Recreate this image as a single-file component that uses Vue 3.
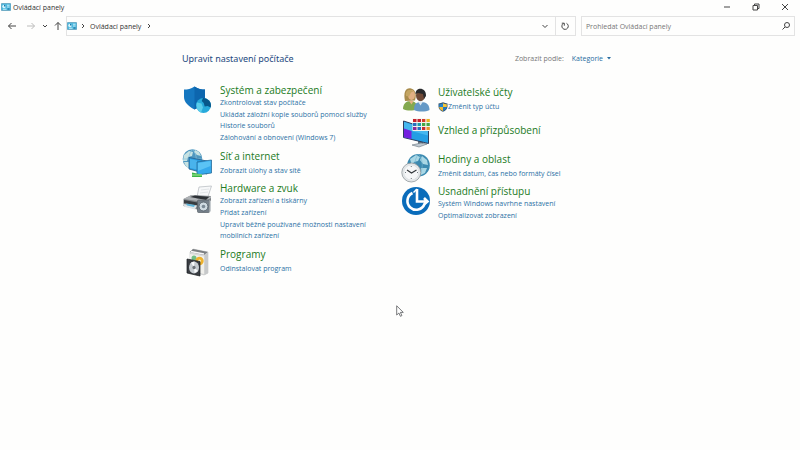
<template>
  <div class="window">
    <header class="title-bar">
      <svg class="panel-icon" viewBox="0 0 20 16" aria-hidden="true">
        <rect x="0.5" y="1" width="19" height="14" rx="1" fill="#4fb9df" stroke="#3b7f9f" />
        <circle cx="6" cy="7" r="3.5" fill="#d9f4fc" />
        <path d="M6 7V3.5A3.5 3.5 0 0 1 9.500 7z" fill="#1677a8" />
        <path d="M12 4.500h5M12 8h5M4 12.500h7" stroke="#e9fbff" stroke-width="1.5" />
        <rect x="13" y="11" width="4" height="2" fill="#17628c" />
      </svg>
      <h1 class="title">Ovládací panely</h1>
      <div class="window-buttons">
        <button type="button" aria-label="Minimalizovat">
          <svg viewBox="0 0 8 8"><path d="M1 4h6" /></svg>
        </button>
        <button type="button" aria-label="Obnovit">
          <svg viewBox="0 0 8 8"><path d="M1 2.500h4.500V7H1zM2.500 2.500V1H7v4.500H5.500" /></svg>
        </button>
        <button type="button" aria-label="Zavřít">
          <svg viewBox="0 0 8 8"><path d="M1 1l6 6M7 1L1 7" /></svg>
        </button>
      </div>
    </header>

    <div class="toolbar">
      <div class="history">
        <button type="button" class="back" aria-label="Zpět">
          <svg viewBox="0 0 10 10"><path d="M9 5H1.500M4.500 2l-3 3 3 3" /></svg>
        </button>
        <button type="button" class="forward" aria-label="Vpřed">
          <svg viewBox="0 0 10 10"><path d="M1 5h7.500M5.500 2l3 3-3 3" /></svg>
        </button>
        <button type="button" class="recent" aria-label="Poslední umístění">
          <svg viewBox="0 0 10 10"><path d="M3 4l2 2 2-2" /></svg>
        </button>
        <button type="button" class="up" aria-label="Nahoru">
          <svg viewBox="0 0 10 10"><path d="M5 9V1.500M2 4.500l3-3 3 3" /></svg>
        </button>
      </div>
      <nav class="address" aria-label="Umístění">
        <svg class="panel-icon" viewBox="0 0 20 16" aria-hidden="true">
          <rect x="0.5" y="1" width="19" height="14" rx="1" fill="#4fb9df" stroke="#3b7f9f" />
          <circle cx="6" cy="7" r="3.5" fill="#d9f4fc" />
          <path d="M6 7V3.500A3.500 3.500 0 0 1 9.500 7z" fill="#1677a8" />
          <path d="M12 4.500h5M12 8h5M4 12.500h7" stroke="#e9fbff" stroke-width="1.5" />
          <rect x="13" y="11" width="4" height="2" fill="#17628c" />
        </svg>
        <svg class="chevron" viewBox="0 0 6 8" aria-hidden="true"><path d="M2 2l2 2-2 2" /></svg>
        <a href="#" class="crumb">Ovládací panely</a>
        <svg class="chevron" viewBox="0 0 6 8" aria-hidden="true"><path d="M2 2l2 2-2 2" /></svg>
        <button type="button" class="expand" aria-label="Předchozí umístění">
          <svg viewBox="0 0 10 10"><path d="M2.500 4L5 6.500 7.500 4" /></svg>
        </button>
        <button type="button" class="refresh" aria-label="Aktualizovat">
          <svg viewBox="0 0 10 10"><path d="M6.500 2.300A3.200 3.200 0 1 1 3.300 2.500M1.800 2.200h2.500v2.500" /></svg>
        </button>
      </nav>
      <form class="search" @submit.prevent>
        <input v-model="query" type="search" placeholder="Prohledat Ovládací panely" aria-label="Prohledat Ovládací panely" />
        <button type="submit" aria-label="Hledat">
          <svg viewBox="0 0 10 10"><circle cx="6" cy="4" r="2.500" /><path d="M4 6L1.500 8.500" /></svg>
        </button>
      </form>
    </div>

    <main class="content">
      <div class="heading">
        <h2>Upravit nastavení počítače</h2>
        <div class="view-by">
          <span id="view-label">Zobrazit podle:</span>
          <button id="view-button" type="button" aria-haspopup="menu" aria-labelledby="view-label view-button">
            Kategorie
            <svg viewBox="0 0 4 3" aria-hidden="true"><path d="M0 0h4L2 2.500z" fill="#286b9f" /></svg>
          </button>
        </div>
      </div>

      <div class="columns">
        <ul v-for="(column, i) in columns" :key="i" class="column" :class="i === 0 ? 'first' : 'second'">
          <li v-for="item in column" :key="item.title" class="category">
            <svg v-if="item.icon === 'security'" class="icon" viewBox="0 0 30 32" aria-hidden="true">
              <path d="M12.500 3.500C9 6 5.500 6.500 2 6.500v7.500c0 5 4 9 10.500 12.500C19 23 23 19 23 14V6.500c-3.500 0-7-.5-10.500-3z" fill="#1577c0" />
              <path d="M12.500 3.500v23C19 23 23 19 23 14V6.500c-3.500 0-7-.5-10.500-3z" fill="#0d66ae" />
              <circle cx="21.500" cy="22.500" r="7.500" fill="#27aadb" />
              <path d="M21 15.100a7.500 7.500 0 0 1 7.700 9.500l-3-1.500-3 .5-1-3.500-2-2z" fill="#07578a" />
              <path d="M15 19.500l4.500 1 1.500 4-2 5a7.500 7.500 0 0 1-4-10z" fill="#5ccdea" />
            </svg>
            <svg v-else-if="item.icon === 'network'" class="icon" viewBox="0 0 30 32" aria-hidden="true">
              <circle cx="10.500" cy="10" r="9.800" fill="#4f97bf" />
              <path d="M2 6l5-4 4 1-1 4-4 1-1 4H1zM13 1l4 2 2 4-4-1-3-3zM2 13h5l2 4-2 2c-3-1-4-3-5-6z" fill="#c7e2e2" />
              <path d="M10.500.5c-5 5-5 14 0 19M10.500.5c5 5 5 14 0 19M1 10h19" fill="none" stroke="#8bc3dd" stroke-width="0.7" />
              <path d="M7 8.500l18 3.500v13L7 20z" fill="#289ce0" stroke="#245d8a" stroke-width="0.800" />
              <path d="M8 10l7 1.500v9L8 19z" fill="#49b3ec" />
              <path d="M15 13l14.500-2v13L15 26z" fill="#35a9ed" stroke="#276d9b" stroke-width="0.800" />
              <path d="M16 14l12.500-2v5L16 22z" fill="#5bc3f5" />
              <path d="M10 23.500l10 2V28H10z" fill="#3bb545" />
              <path d="M10 26h10" stroke="#a6e79c" />
            </svg>
            <svg v-else-if="item.icon === 'hardware'" class="icon" viewBox="0 0 30 32" aria-hidden="true">
              <path d="M15 16l2-10 12.500-1-4 12z" fill="#f7f8f9" stroke="#b3b8bc" stroke-width="0.700" />
              <path d="M19 9l8-1M18 12l8-1" stroke="#d7dbde" stroke-width="0.700" />
              <path d="M1.500 18l8-4 19.500 1v9l-8 6-19.500-5z" fill="#7c8185" />
              <path d="M1.500 18l8-4 6 .5-1 3 11-.5 3.500-2v2l-7 4z" fill="#aeb2b5" />
              <path d="M8 16l5-1.500 14 1.500-3 3z" fill="#2d3135" />
              <path d="M2 19l16 3v3L2 22z" fill="#383c40" />
              <path d="M1 23l14 1.500-2 4L3 26z" fill="#e1e6e9" />
              <path d="M4 22.500l9 1.500-1 2-7-1.500z" fill="#5eb3d7" />
              <rect x="15.500" y="19" width="12" height="12.500" rx="1" fill="#75808a" stroke="#565f66" stroke-width="0.700" />
              <circle cx="21.500" cy="25.500" r="4.500" fill="#cfdae1" stroke="#5b6771" />
              <circle cx="21.500" cy="25.500" r="1.800" fill="#7b8a96" />
              <path d="M27.500 19l1.500 1v10l-1.500 1.500z" fill="#c8cdd0" />
            </svg>
            <svg v-else-if="item.icon === 'programs'" class="icon" viewBox="0 0 30 32" aria-hidden="true">
              <path d="M8 5l3-3 15 3v21l-4 2-14-4z" fill="#d9dada" stroke="#b6b8b9" stroke-width="0.500" />
              <path d="M8 5l3-3 15 3-4 3z" fill="#7b7f82" />
              <path d="M9 4.500l13 2.500" stroke="#f7f7f7" stroke-width="1.500" />
              <path d="M8 7l14 2.500V27L8 23z" fill="#f0f0ec" />
              <circle cx="12" cy="11" r="2.500" fill="#72bf86" />
              <circle cx="17.500" cy="14" r="4.200" fill="#eeb22d" />
              <circle cx="17.500" cy="14" r="1.500" fill="#fff0b9" />
              <path d="M5 12l13 2.500V29L5 26z" fill="#3a3d42" stroke="#191c20" stroke-width="0.700" />
              <ellipse cx="12" cy="20.500" rx="5" ry="6" fill="#c5cbd0" />
              <path d="M12 20.500l-3-5 3.500-1zM12 20.500l4 3.500-3.500 2z" fill="#f8fafb" />
              <ellipse cx="12" cy="20.500" rx="1.600" ry="1.800" fill="#6c7379" />
              <path d="M22.500 8L26 5v21l-3.500 2z" fill="#c7c9ca" />
            </svg>
            <svg v-else-if="item.icon === 'users'" class="icon" viewBox="0 0 30 32" aria-hidden="true">
              <path d="M5 16C3 7 6 2.500 11 3.500c4 1 6 5 4 12z" fill="#a98c4c" />
              <ellipse cx="11.500" cy="10" rx="3.500" ry="5" fill="#e2b083" />
              <path d="M6 11c-1-6 3-7 8-5l-3 1.500-2 4z" fill="#c4a563" />
              <path d="M3 24c0-5 3-8 7-8 5 0 7 2 7 8-4 2-10 2-14 0z" fill="#83a94f" />
              <path d="M9 16l2.500 3.500 2-3.500z" fill="#e6b385" />
              <ellipse cx="20.500" cy="10.500" rx="4.500" ry="5.800" fill="#704a37" />
              <path d="M15.500 9c0-7.500 11-7 10.500 2l-2 3-1-5-5-1z" fill="#292a2c" />
              <path d="M14 25c0-6 2-8 7-8 6 0 8.500 3 8.500 8-4 2-11 2-15.500 0z" fill="#6599c6" />
              <path d="M18 16.500l2.500 4 2.500-4z" fill="#dfe9f0" />
            </svg>
            <svg v-else-if="item.icon === 'display'" class="icon" viewBox="0 0 30 32" aria-hidden="true">
              <path d="M18 22l5 1v4l-5-1z" fill="#67737d" />
              <path d="M12 27l9-2 6 1-8 3z" fill="#c0cad2" stroke="#687680" stroke-width="0.600" />
              <path d="M3.500 3l25 8v14.500l-25-6z" fill="#249ee3" stroke="#2c3f60" />
              <path d="M4 4l24 7.500v6L4 11z" fill="#45b7ef" />
              <path d="M4 10.500l7.500 2.500v8L4 19.200z" fill="#7420e0" />
              <path d="M12.500.500H30v12.500H12.500z" fill="#f4f4ec" />
              <path d="M13 1h3.500v3H13zM17.500 1H21v3h-3.500z" fill="#c5222e" />
              <path d="M22 1h3.300v3H22z" fill="#d33c2a" />
              <path d="M26.500 1h3.300v3h-3.300z" fill="#e9b420" />
              <path d="M13 5h3.500v3H13zM17.500 9H21v3h-3.500z" fill="#276dbe" />
              <path d="M17.500 5H21v3h-3.500z" fill="#1a9da8" />
              <path d="M22 5h3.300v3H22zM26.500 5h3.300v3h-3.300z" fill="#44a746" />
              <path d="M13 9h3.500v3H13z" fill="#8d2894" />
              <path d="M22 9h3.300v3H22z" fill="#c72c31" />
              <path d="M26.500 9h3.300v3h-3.300z" fill="#e8932a" />
            </svg>
            <svg v-else-if="item.icon === 'clock'" class="icon" viewBox="0 0 30 32" aria-hidden="true">
              <circle cx="18.500" cy="13.300" r="11.300" fill="#3c8ab0" />
              <path d="M10 7l6-4 4 2-2 4-4 1-2 4zM22 4l5 4 1 5-5-1-3-4zM21 16h6l-2 5-4 2z" fill="#a9d7e5" />
              <path d="M18.500 2c-5 6-5 16 0 23M18.500 2c5 6 5 16 0 23" fill="none" stroke="#75b4ce" stroke-width="0.600" />
              <circle cx="11.300" cy="20.500" r="9.500" fill="#e4e7e9" stroke="#8f979b" stroke-width="0.800" />
              <circle cx="11.300" cy="20.500" r="7.500" fill="#f6f7f8" stroke="#d3d8da" stroke-width="0.500" />
              <path d="M7 18l4.500 3 5-3" fill="none" stroke="#34383b" stroke-width="1.200" />
              <path d="M11.300 14v1M11.300 26v1M5 20.500h1M17 20.500h1" stroke="#788085" />
            </svg>
            <svg v-else class="icon" viewBox="0 0 30 32" aria-hidden="true">
              <circle cx="16" cy="17" r="14" fill="#0a6cba" />
              <path d="M12.500 9A8.800 8.800 0 1 0 24.500 20" fill="none" stroke="#fff" stroke-width="2.600" />
              <path d="M17 5v12.500h10M24 14l3.500 3.500-3.500 3" fill="none" stroke="#fff" stroke-width="2.600" />
              <path d="M13.500 8.500L17 5" stroke="#fff" stroke-width="1.500" />
            </svg>

            <div class="text" :class="{ spaced: item.links.length === 1, alone: item.links.length === 0 }">
              <h3><a href="#">{{ item.title }}</a></h3>
              <p v-for="link in item.links" :key="link" :class="{ shielded: item.shield }">
                <svg v-if="item.shield" class="shield" viewBox="0 0 10 10" aria-hidden="true">
                  <path d="M5 .3C3.500 1 2 1.500.5 1.500v3C.5 7 2.500 9 5 9.800 7.500 9 9.500 7 9.500 4.500v-3C8 1.500 6.500 1 5 .3z" fill="#37546c" />
                  <path d="M5 1.200V5H1.200V2.200C2.700 2.200 4 1.800 5 1.200z" fill="#2484cf" />
                  <path d="M5 1.200V5h3.800V2.200C7.300 2.200 6 1.800 5 1.200z" fill="#f5c63c" />
                  <path d="M1.200 5H5v4C2.800 8.300 1.200 7 1.200 5z" fill="#f2bd32" />
                  <path d="M5 5h3.800c0 2-1.600 3.300-3.800 4z" fill="#2378c1" />
                </svg>
                <a href="#">{{ link }}</a>
              </p>
            </div>
          </li>
        </ul>
      </div>
    </main>

    <svg class="pointer" viewBox="0 0 8 12" aria-hidden="true">
      <path d="M.7.8v9.200l2.200-2 1.500 3.300 1.500-.7-1.500-3.200h2.900z" fill="#fff" stroke="#55585b" stroke-width="0.800" />
    </svg>
  </div>
</template>

<script setup>
import { ref } from "vue";

const query = ref("");

// Categories in the order they appear, one list per column
const columns = [
  [
    {
      title: "Systém a zabezpečení",
      icon: "security",
      links: [
        "Zkontrolovat stav počítače",
        "Ukládat záložní kopie souborů pomocí služby Historie souborů",
        "Zálohování a obnovení (Windows 7)",
      ],
    },
    { title: "Síť a internet", icon: "network", links: ["Zobrazit úlohy a stav sítě"] },
    {
      title: "Hardware a zvuk",
      icon: "hardware",
      links: [
        "Zobrazit zařízení a tiskárny",
        "Přidat zařízení",
        "Upravit běžně používané možnosti nastavení mobilních zařízení",
      ],
    },
    { title: "Programy", icon: "programs", links: ["Odinstalovat program"] },
  ],
  [
    { title: "Uživatelské účty", icon: "users", links: ["Změnit typ účtu"], shield: true },
    { title: "Vzhled a přizpůsobení", icon: "display", links: [] },
    { title: "Hodiny a oblast", icon: "clock", links: ["Změnit datum, čas nebo formáty čísel"] },
    {
      title: "Usnadnění přístupu",
      icon: "access",
      links: ["Systém Windows navrhne nastavení", "Optimalizovat zobrazení"],
    },
  ],
];
</script>

<style>
body {
  background: #fefefd;
}
</style>

<style scoped>
.window {
  position: relative;
  min-height: 100vh;
  background: #fefefd;
  color: #333;
  font-family: "Open Sans", "Noto Sans", sans-serif;
  font-size: 7px;
  line-height: 11px;
}

h1,
h2,
h3,
p,
ul {
  margin: 0;
  padding: 0;
  font-weight: normal;
}

ul {
  list-style: none;
}

a {
  color: inherit;
  text-decoration: none;
}

a:hover {
  text-decoration: underline;
}

button {
  display: flex;
  align-items: center;
  justify-content: center;
  padding: 0;
  border: 0;
  background: none;
  color: inherit;
  font: inherit;
}

button svg,
.chevron {
  fill: none;
  stroke: #444;
  stroke-width: 1;
}

.title-bar {
  display: flex;
  align-items: center;
  height: 14px;
  padding: 0 1px;
}

.panel-icon {
  width: 10px;
  height: 8px;
}

.title {
  margin-left: 2px;
  font-size: 7px;
}

.window-buttons {
  display: flex;
  margin-left: auto;
}

.window-buttons button {
  width: 29px;
  height: 14px;
}

.window-buttons svg {
  width: 8px;
  height: 8px;
}

.toolbar {
  display: flex;
  align-items: center;
  padding: 2px 5px 0 2px;
}

.history {
  display: flex;
}

.history button {
  height: 20px;
}

.back {
  width: 20px;
}

.forward {
  width: 18px;
  opacity: 0.35;
}

.recent {
  width: 10px;
}

.up {
  width: 16px;
}

.history svg,
.address button svg,
.search svg {
  width: 10px;
  height: 10px;
}

.address {
  display: flex;
  flex: 1;
  align-items: center;
  box-sizing: border-box;
  height: 20px;
  border: 1px solid #e3e3e3;
}

.chevron {
  width: 6px;
  height: 8px;
  margin: 0 4px 0 3px;
}

.crumb + .chevron {
  margin-left: 5px;
}

.expand {
  width: 20px;
  height: 18px;
  margin-left: auto;
}

.refresh {
  width: 20px;
  height: 18px;
  border-left: 1px solid #e3e3e3;
}

.search {
  display: flex;
  align-items: center;
  box-sizing: border-box;
  width: 27%;
  height: 20px;
  margin-left: 5px;
  border: 1px solid #e3e3e3;
}

.search input {
  flex: 1;
  min-width: 0;
  padding: 0 0 0 4px;
  border: 0;
  outline: 0;
  background: none;
  color: #333;
  font: inherit;
}

.search input::placeholder {
  color: #777;
  opacity: 1;
}

.search button {
  width: 16px;
}

.content {
  max-width: 429px;
  margin: 0 auto;
  padding: 14px 7px 0 0;
}

.heading {
  display: flex;
  align-items: center;
  justify-content: space-between;
  height: 16px;
}

h2 {
  color: #1d4a80;
  font-family: "Noto Sans", "Open Sans", sans-serif;
  font-size: 9px;
}

.view-by {
  display: flex;
  gap: 8px;
  color: #777;
}

.view-by button {
  gap: 4px;
  color: #286b9f;
}

.view-by svg {
  width: 4px;
  height: 3px;
  stroke: none;
}

.columns {
  display: grid;
  grid-template-columns: 218fr 211fr;
  padding-top: 17px;
}

.column {
  display: grid;
  align-content: start;
}

.first {
  grid-template-rows: minmax(66px, auto) minmax(32px, auto) minmax(66px, auto) auto;
}

.second {
  grid-template-rows: minmax(33px, auto) minmax(34px, auto) minmax(32px, auto) auto;
  padding-top: 2px;
}

.category {
  display: flex;
  align-items: flex-start;
  gap: 8px;
}

.icon {
  flex: none;
  width: 30px;
  height: 32px;
}

.text {
  flex: 1;
  padding-right: 22px;
}

h3 {
  color: #217a22;
  font-size: 10px;
  line-height: 14px;
}

p {
  color: #2b71a5;
}

p + p {
  margin-top: 1px;
}

.spaced p {
  margin-top: 2px;
}

.alone {
  padding-top: 5px;
}

.shielded {
  display: flex;
  align-items: center;
}

.shield {
  width: 10px;
  height: 10px;
}

.pointer {
  position: absolute;
  top: 305px;
  left: 396px;
  width: 8px;
  height: 12px;
}
</style>
